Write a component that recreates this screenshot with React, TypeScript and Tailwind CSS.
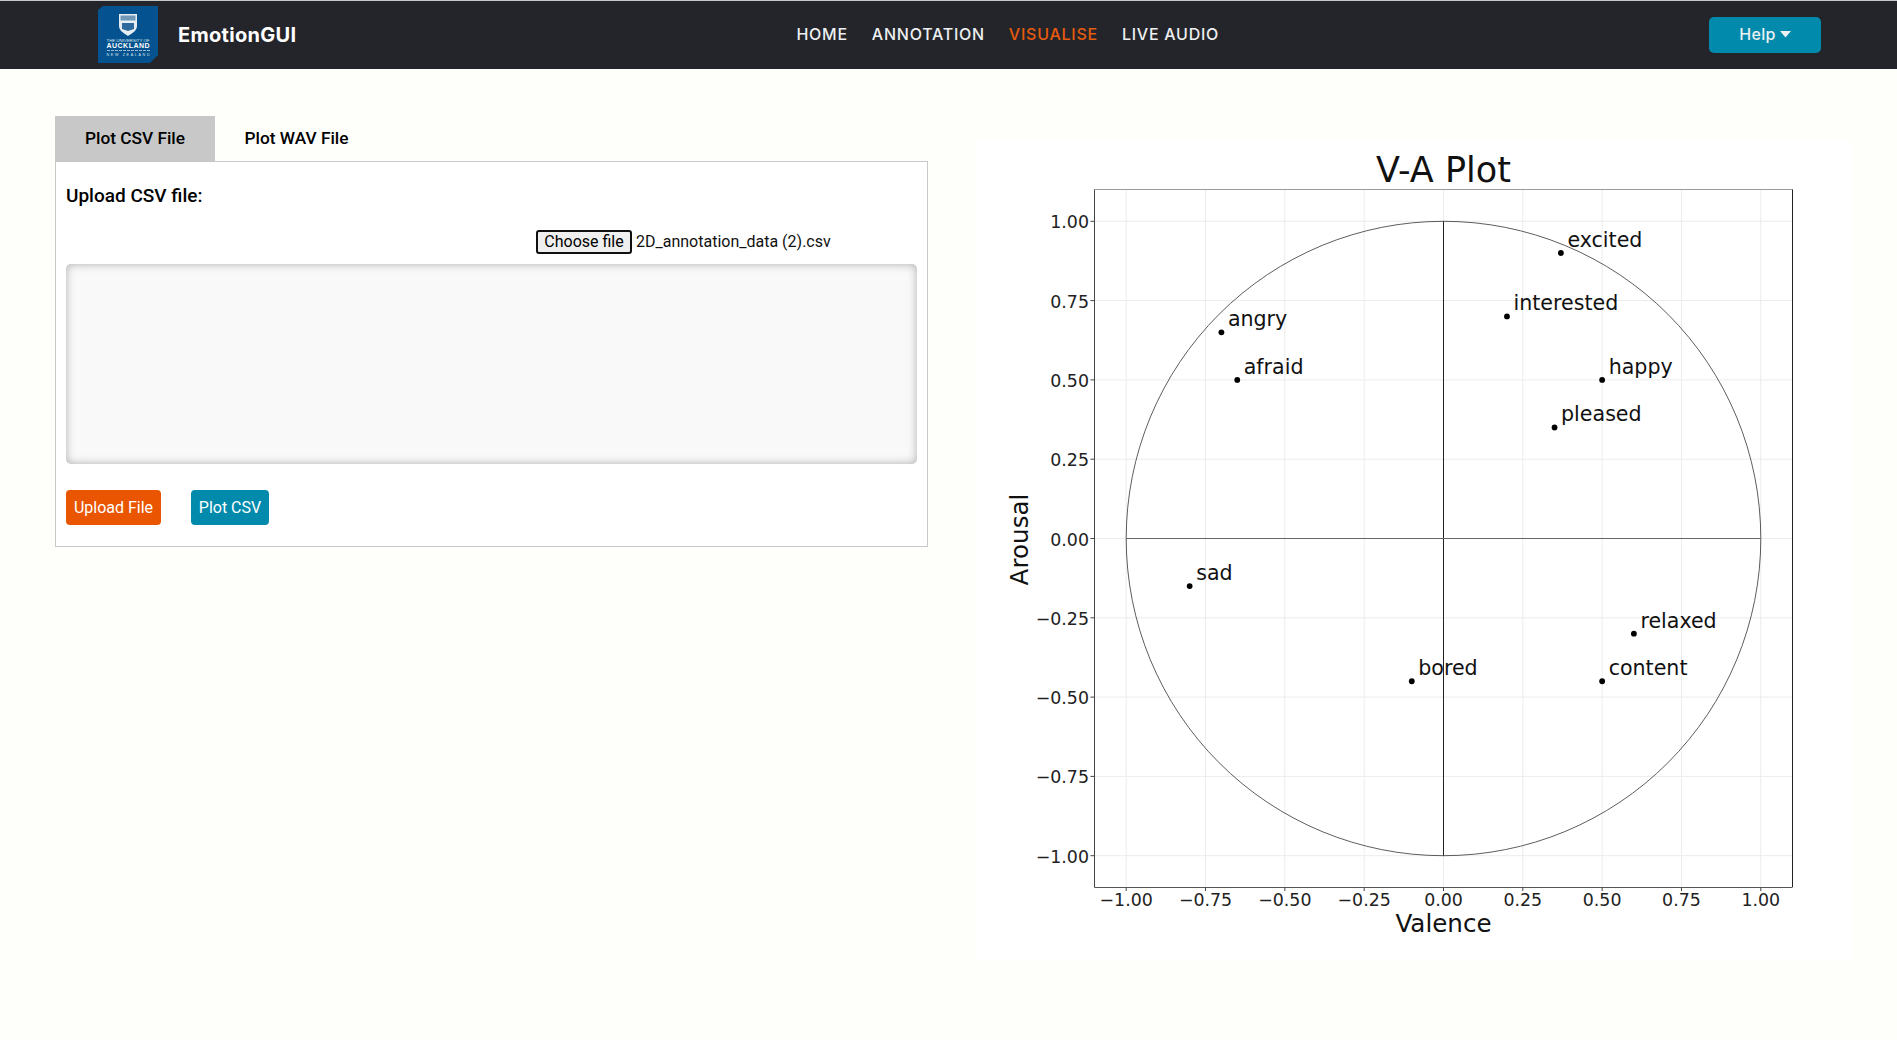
import React from "react"

const navLinks = [
  { label: "HOME", active: false },
  { label: "ANNOTATION", active: false },
  { label: "VISUALISE", active: true },
  { label: "LIVE AUDIO", active: false },
]

const points = [
  { label: "excited", v: 0.37, a: 0.9 },
  { label: "interested", v: 0.2, a: 0.7 },
  { label: "happy", v: 0.5, a: 0.5 },
  { label: "pleased", v: 0.35, a: 0.35 },
  { label: "angry", v: -0.7, a: 0.65 },
  { label: "afraid", v: -0.65, a: 0.5 },
  { label: "sad", v: -0.8, a: -0.15 },
  { label: "bored", v: -0.1, a: -0.45 },
  { label: "content", v: 0.5, a: -0.45 },
  { label: "relaxed", v: 0.6, a: -0.3 },
]

const ticks = [-1, -0.75, -0.5, -0.25, 0, 0.25, 0.5, 0.75, 1]

// svg sits at page x=975, y=140
const cx = 468.5
const cy = 398.5
const rx = 317.3
const ry = 317.2
const X = (v: number) => cx + v * rx
const Y = (a: number) => cy - a * ry
const fmt = (t: number) => (t < 0 ? "\u2212" : "") + Math.abs(t).toFixed(2)

const Logo = () => (
  <svg width="60" height="58" viewBox="0 0 60 58" className="ml-[98px] shrink-0">
    <polygon points="0,4 5,0 60,0 60,49 52,57 0,57" fill="#04528f" />
    <path d="M21 8h18v12c0 4-4 7-9 10-5-3-9-6-9-10z" fill="#e6edf3" />
    <path d="M22.5 9.5h15v5h-15z" fill="#6f97b8" />
    <path d="M24 17h12v6l-6 2-6-2z" fill="#2f6a9c" />
    <text x="30" y="35.5" textAnchor="middle" fontSize="4.4" fill="#dfe8f0" fontFamily="'Liberation Sans', sans-serif" textLength="43">THE UNIVERSITY OF</text>
    <text x="30" y="42" textAnchor="middle" fontSize="7" fontWeight="700" fill="#ffffff" fontFamily="'Liberation Sans', sans-serif" textLength="43">AUCKLAND</text>
    <path d="M9 44.5h43" stroke="#9fbcd4" strokeWidth="1.2" strokeDasharray="3 1" />
    <text x="30" y="50" textAnchor="middle" fontSize="3.6" fill="#dfe8f0" fontFamily="'Liberation Sans', sans-serif" textLength="43">NEW ZEALAND</text>
  </svg>
)

const VAPlot = () => (
  <svg width="877" height="820" viewBox="0 0 877 820" className="shrink-0 bg-white" fontFamily="'DejaVu Sans', sans-serif">
    {ticks.map((t) => (
      <g key={t}>
        <line x1={X(t)} x2={X(t)} y1="49.5" y2="747" stroke="#ececec" />
        <line x1="119.5" x2="817.6" y1={Y(t)} y2={Y(t)} stroke="#ececec" />
        <line x1={X(t)} x2={X(t)} y1="747" y2="751" stroke="#444" />
        <line x1="115.5" x2="119.5" y1={Y(t)} y2={Y(t)} stroke="#444" />
        <text x={X(t)} y="766" textAnchor="middle" fontSize="17.4" fill="#222">{fmt(t)}</text>
        <text x="114" y={Y(t) + 7} textAnchor="end" fontSize="17.4" fill="#222">{fmt(t)}</text>
      </g>
    ))}
    <ellipse cx={cx} cy={cy} rx={rx} ry={ry} fill="none" stroke="#333" strokeWidth="0.8" />
    <line x1={cx} x2={cx} y1={Y(1)} y2={Y(-1)} stroke="#222" strokeWidth="1" />
    <line x1={X(-1)} x2={X(1)} y1={cy} y2={cy} stroke="#666" strokeWidth="1" />
    <line x1="119.5" x2="817.5" y1="49.5" y2="49.5" stroke="#999" />
    <line x1="817.5" x2="817.5" y1="49.5" y2="747" stroke="#222" />
    <line x1="119.5" x2="119.5" y1="49.5" y2="747.5" stroke="#444" />
    <line x1="119.5" x2="817.5" y1="747.5" y2="747.5" stroke="#555" />
    {points.map((p) => (
      <g key={p.label}>
        <circle cx={X(p.v)} cy={Y(p.a)} r="2.9" fill="#000" />
        <text x={X(p.v) + 6.5} y={Y(p.a) - 6} fontSize="20.6" fill="#111">{p.label}</text>
      </g>
    ))}
    <text x={cx} y="42" textAnchor="middle" fontSize="35" fill="#111">V-A Plot</text>
    <text x={cx} y="791.5" textAnchor="middle" fontSize="24.6" fill="#111">Valence</text>
    <text transform={`translate(53 ${cy + 1}) rotate(-90)`} textAnchor="middle" fontSize="24.6" fill="#111">Arousal</text>
  </svg>
)

const App = () => {
  return (
    <div className="h-[1041px] bg-[#fefffb] font-['Roboto',sans-serif] text-black">
      <header className="h-[69px] flex items-center bg-[#24252a] border-t border-[#c8c8c8]">
        <Logo />
        <span className="ml-5 mb-[1px] text-[20px] font-bold text-white font-['Inter',sans-serif] tracking-[0.3px]">EmotionGUI</span>
        <nav className="ml-[500px] mb-[2px] flex items-center gap-[24px]">
          {navLinks.map((link) => (
            <a
              key={link.label}
              className={`text-[16px] font-medium font-['Inter',sans-serif] tracking-[0.75px] ${link.active ? "text-[#e75b0c]" : "text-[#edf0f1]"}`}
            >
              {link.label}
            </a>
          ))}
        </nav>
        <button className="ml-auto mr-[76px] w-[112px] h-[36px] pb-[2px] rounded-[5px] bg-[#028aad] flex items-center justify-center gap-1 text-[16px] font-medium text-[#edf0f1] font-['Inter',sans-serif] tracking-[0.3px]">
          Help
          <svg width="11" height="7" viewBox="0 0 11 7"><polygon points="0,0 11,0 5.5,6.5" fill="#edf0f1" /></svg>
        </button>
      </header>

      <main className="flex items-start">
        <section className="ml-[55px] mt-[47px] w-[873px] shrink-0">
          <div className="flex">
            <button className="h-[45px] w-[160px] pt-[1px] bg-[#c8c8c8] text-[17.3px] font-medium">Plot CSV File</button>
            <button className="h-[45px] w-[163px] pt-[1px] text-[17.3px] font-medium">Plot WAV File</button>
          </div>
          <div className="h-[386px] border border-[#c8c8c8] bg-white px-[10px]">
            <h3 className="mt-[23px] text-[19px] leading-[21px] font-medium">Upload CSV file:</h3>
            <div className="mt-[24px] ml-[470px] flex items-center gap-[4px] text-[16px]">
              <button className="h-[24px] w-[96px] rounded-[3px] border-2 border-[#101010] bg-[#efefef] text-[16px] leading-none">Choose file</button>
              <span className="text-[#111]">2D_annotation_data (2).csv</span>
            </div>
            <div className="mt-[10px] h-[200px] w-[851px] rounded-[5px] bg-[#f9f9f9] shadow-[inset_0_0_10px_rgba(0,0,0,0.3)]"></div>
            <div className="mt-[26px] flex gap-[30px]">
              <button className="h-[35px] w-[95px] rounded-[4px] bg-[#e95500] text-[16px] text-white">Upload File</button>
              <button className="h-[35px] w-[78px] rounded-[4px] bg-[#028aad] text-[16px] text-white">Plot CSV</button>
            </div>
          </div>
        </section>
        <section className="ml-[47px] mt-[71px]">
          <VAPlot />
        </section>
      </main>
    </div>
  )
}

export default App
